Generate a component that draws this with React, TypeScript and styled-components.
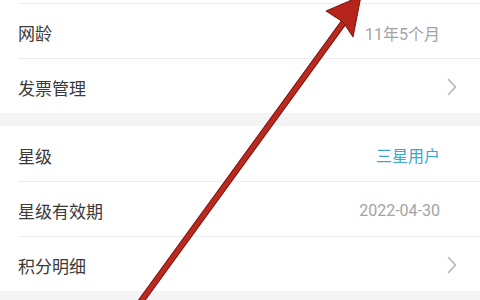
import React from 'react';
import styled, { createGlobalStyle } from 'styled-components';

const GlobalStyle = createGlobalStyle`
    html, body {
        margin: 0;
        padding: 0;
        background: #ffffff;
    }
    * {
        box-sizing: border-box;
    }
`

const Screen = styled.div`
    position: relative;
    width: 480px;
    height: 300px;
    overflow: hidden;
    background: #f4f4f4;
    font-family: "Roboto", "Noto Sans CJK SC", sans-serif;
`

const Group = styled.div<{ $top?: number }>`
    display: flex;
    flex-direction: column;
    background: #ffffff;
    padding-top: ${props => props.$top || 0}px;
    margin-bottom: 13px;
`

const Row = styled.div`
    display: flex;
    padding-left: 18px;
`

const RowBody = styled.div<{ $divider?: boolean }>`
    flex: 1;
    height: 55px;
    display: flex;
    align-items: center;
    justify-content: space-between;
    padding: 3px 23px 0 0;
    border-top: ${props => (props.$divider ? '1px solid #ececec' : 'none')};
`

const Label = styled.span`
    font-size: 17px;
    color: #3a3a3a;
`

const Value = styled.span<{ $accent?: boolean }>`
    font-size: 16px;
    margin-right: 17px;
    color: ${props => (props.$accent ? '#3aa6d2' : '#a3a3a3')};
`

const Chevron = styled.svg`
    width: 10px;
    height: 18px;
    margin-bottom: 2px;
`

const Arrow = styled.svg`
    position: absolute;
    left: 0;
    top: 0;
    width: 480px;
    height: 300px;
    pointer-events: none;
`

type Item = { label: string; value?: string; accent?: boolean; link?: boolean }

const groups: { top: number; items: Item[]; firstDivider: boolean }[] = [
    {
        top: 3,
        firstDivider: true,
        items: [
            { label: '网龄', value: '11年5个月' },
            { label: '发票管理', link: true },
        ],
    },
    {
        top: 0,
        firstDivider: false,
        items: [
            { label: '星级', value: '三星用户', accent: true },
            { label: '星级有效期', value: '2022-04-30' },
            { label: '积分明细', link: true },
        ],
    },
]

const ChevronIcon = () => (
    <Chevron viewBox="0 0 10 18">
        <path d="M1.5 1.5 L8.5 9 L1.5 16.5" fill="none" stroke="#b5b5b5" strokeWidth="1.6" strokeLinecap="round" strokeLinejoin="round" />
    </Chevron>
)

export default function App() {
    return (
        <>
            <GlobalStyle />
            <Screen>
                {groups.map((group, gi) => (
                    <Group key={gi} $top={group.top}>
                        {group.items.map((item, i) => (
                            <Row key={item.label}>
                                <RowBody $divider={i > 0 || group.firstDivider}>
                                    <Label>{item.label}</Label>
                                    {item.link ? <ChevronIcon /> : <Value $accent={item.accent}>{item.value}</Value>}
                                </RowBody>
                            </Row>
                        ))}
                    </Group>
                ))}
                {/* red annotation arrow drawn over the list */}
                <Arrow viewBox="0 0 480 300">
                    <line x1="139" y1="304" x2="344" y2="22" stroke="#7e1410" strokeWidth="6.5" strokeLinecap="round" />
                    <line x1="139" y1="304" x2="344" y2="22" stroke="#bb2a1f" strokeWidth="4.5" strokeLinecap="round" />
                    <polygon points="361,-4 326,11 343,22 353,37" fill="#b5251b" stroke="#7e1410" strokeWidth="1" strokeLinejoin="round" />
                </Arrow>
            </Screen>
        </>
    )
}
